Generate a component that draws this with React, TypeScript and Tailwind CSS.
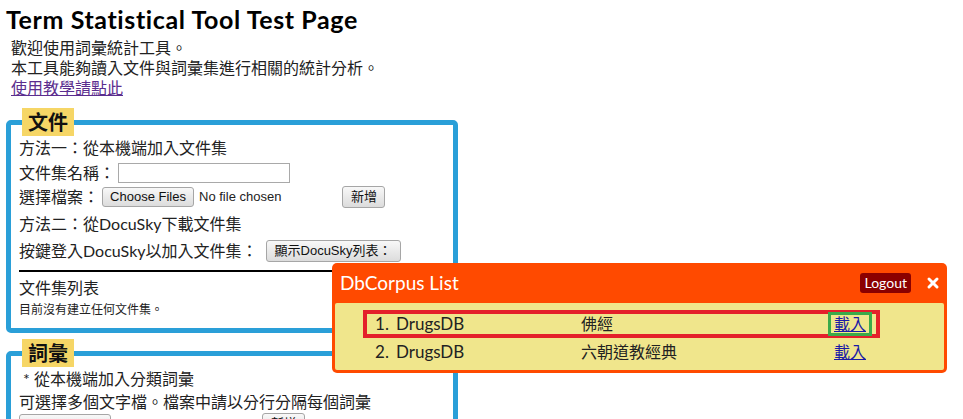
import { X } from 'lucide-react';

const ff = "font-['Lato','Noto_Sans_CJK_TC',sans-serif]";
const btn =
    "inline-flex items-center justify-center border border-[#a6a6a6] rounded-[3px] bg-gradient-to-b from-[#f8f8f8] to-[#dcdcdc] text-[13px] text-[#111] font-['Liberation_Sans','Noto_Sans_CJK_TC',sans-serif]";

const corpora = [
    { no: 1, name: 'DrugsDB', desc: '佛經', active: true },
    { no: 2, name: 'DrugsDB', desc: '六朝道教經典', active: false },
];

function Legend({ children }: { children: string }) {
    return (
        <legend className="ml-[3px] h-[28px] px-[6px] bg-[#f6d666] text-[20px] leading-[28px] font-bold text-[#111]">
            {children}
        </legend>
    );
}

function FileRow({ label, gap }: { label?: string; gap: string }) {
    return (
        <div className="h-[22px] flex items-center">
            {label && <span className="mr-[3px]">{label}</span>}
            <span className={`${btn} w-[92px] h-[20px]`}>Choose Files</span>
            <span className="ml-[5px] text-[13px] font-['Liberation_Sans',sans-serif]">No file chosen</span>
            <span className={`${btn} w-[43px] h-[22px] ${gap}`}>新增</span>
        </div>
    );
}

function CorpusPopup() {
    return (
        <div className={`absolute left-[332px] top-[263px] w-[615px] h-[110px] bg-[#ff4a00] rounded-[5px] px-[3px] pb-[3px] flex flex-col ${ff}`}>
            <div className="h-[40px] flex items-center shrink-0">
                <span className="pl-[5px] text-[19px] text-white">DbCorpus List</span>
                <span className="ml-auto h-[20px] px-[4px] rounded-[3px] bg-[#8b0000] text-white text-[14px] leading-[20px]">
                    Logout
                </span>
                <X className="ml-[14px] mr-[3px] w-[16px] h-[16px] text-white" strokeWidth={4.5} />
            </div>
            <div className="flex-1 bg-[#f0e68c] rounded-[2px] pt-[7px] text-[#222]">
                {corpora.map(c => (
                    <div
                        key={c.no}
                        className={`ml-[28px] w-[517px] h-[28px] border-[4px] flex items-center ${c.active ? 'border-[#e4202a]' : 'border-transparent'}`}
                    >
                        <span className="pl-[8px] w-[29px] text-[17px]">{c.no}.</span>
                        <span className="w-[185px] text-[17px]">{c.name}</span>
                        <span className="w-[247px] text-[16px]">{c.desc}</span>
                        <span
                            className={`h-[24px] px-[3px] border-[3px] flex items-center text-[16px] text-[#1a1aa6] underline ${c.active ? 'border-[#3aaa4a]' : 'border-transparent'}`}
                        >
                            載入
                        </span>
                    </div>
                ))}
            </div>
        </div>
    );
}

export default function App() {
    return (
        <div className={`relative w-[963px] h-[419px] overflow-hidden bg-white text-[#222] pt-[1px] ${ff}`}>
            <h1 className="ml-[6px] h-[36px] text-[25px] leading-[36px] font-bold tracking-[0.6px] text-black">
                Term Statistical Tool Test Page
            </h1>

            <div className="mt-[1px] ml-[11px] text-[16px] leading-[20px]">
                <p>歡迎使用詞彙統計工具。</p>
                <p>本工具能夠讀入文件與詞彙集進行相關的統計分析。</p>
                <a className="text-[#5b2d8e] underline">使用教學請點此</a>
            </div>

            {/* 文件 */}
            <fieldset className="mt-[10px] ml-[6px] w-[452px] m-0 border-[5px] border-[#2a9fd8] rounded-[5px] px-[8px] pt-0 pb-[8px] text-[16px]">
                <Legend>文件</Legend>
                <div className="h-[24px] flex items-center">方法一：從本機端加入文件集</div>
                <div className="h-[26px] flex items-center">
                    <span>文件集名稱：</span>
                    <span className="ml-[3px] w-[172px] h-[20px] border border-[#a9a9a9] bg-white" />
                </div>
                <FileRow label="選擇檔案：" gap="ml-[61px]" />
                <div className="h-[32px] flex items-center">方法二：從DocuSky下載文件集</div>
                <div className="h-[22px] flex items-center">
                    <span>按鍵登入DocuSky以加入文件集：</span>
                    <span className={`${btn} ml-[8px] w-[135px] h-[22px]`}>顯示DocuSky列表：</span>
                </div>
                <div className="mt-[8px] h-[2px] bg-black" />
                <div className="mt-[4px] h-[24px] flex items-center">文件集列表</div>
                <div className="h-[20px] flex items-center text-[12px]">目前沒有建立任何文件集。</div>
            </fieldset>

            {/* 詞彙 */}
            <fieldset className="mt-[6px] ml-[6px] w-[452px] m-0 border-[5px] border-[#2a9fd8] rounded-[5px] px-[8px] pt-0 pb-[8px] text-[16px]">
                <Legend>詞彙</Legend>
                <div className="h-[24px] flex items-center pl-[4px]">* 從本機端加入分類詞彙</div>
                <div className="h-[22px] flex items-center">可選擇多個文字檔。檔案中請以分行分隔每個詞彙</div>
                <FileRow gap="ml-[64px]" />
            </fieldset>

            <CorpusPopup />
        </div>
    );
}
